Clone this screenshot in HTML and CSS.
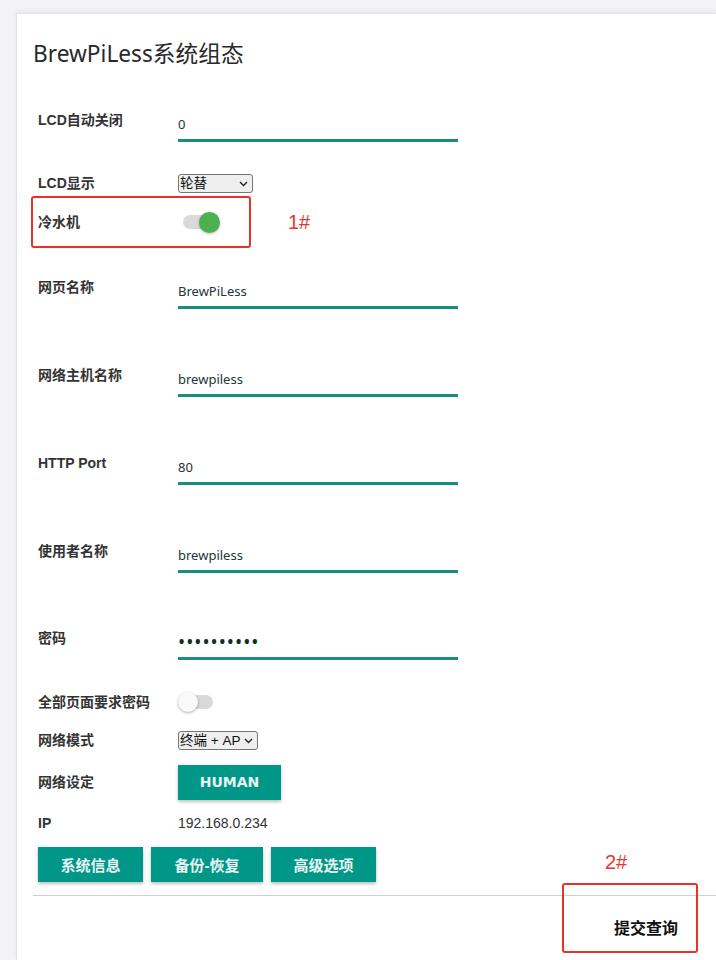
FILE: index.html
```html
<!DOCTYPE html>
<html lang="zh-CN">
<head>
<meta charset="utf-8">
<title>BrewPiLess系统组态</title>
<link rel="stylesheet" href="styles.css">
</head>
<body>
<div class="card">
  <h1 class="title">BrewPiLess系统组态</h1>
  <form class="form">
    <div class="row row-63">
      <label class="lbl">LCD自动关闭</label>
      <div class="ctl ctl-input"><input class="txt" type="text" value="0"></div>
    </div>
    <div class="row row-39">
      <label class="lbl">LCD显示</label>
      <div class="ctl">
        <span class="sel sel-75">
          <select><option>轮替</option></select>
          <svg class="chev" width="9" height="6" viewBox="0 0 9 6"><path d="M1 1 L4.5 4.5 L8 1" fill="none" stroke="#222" stroke-width="1.4"/></svg>
        </span>
      </div>
    </div>
    <div class="row row-65">
      <label class="lbl">冷水机</label>
      <div class="ctl"><span class="toggle toggle-on"><span class="knob"></span></span></div>
    </div>
    <div class="row row-88">
      <label class="lbl">网页名称</label>
      <div class="ctl ctl-input"><input class="txt" type="text" value="BrewPiLess"></div>
    </div>
    <div class="row row-88">
      <label class="lbl">网络主机名称</label>
      <div class="ctl ctl-input"><input class="txt" type="text" value="brewpiless"></div>
    </div>
    <div class="row row-88">
      <label class="lbl">HTTP Port</label>
      <div class="ctl ctl-input"><input class="txt" type="text" value="80"></div>
    </div>
    <div class="row row-87">
      <label class="lbl">使用者名称</label>
      <div class="ctl ctl-input"><input class="txt" type="text" value="brewpiless"></div>
    </div>
    <div class="row row-64">
      <label class="lbl">密码</label>
      <div class="ctl ctl-input"><input class="txt pwd" type="password" value="brewpiless"></div>
    </div>
    <div class="row row-38">
      <label class="lbl">全部页面要求密码</label>
      <div class="ctl"><span class="toggle"><span class="knob"></span></span></div>
    </div>
    <div class="row row-42">
      <label class="lbl">网络模式</label>
      <div class="ctl">
        <span class="sel sel-80">
          <select><option>终端 + AP</option></select>
          <svg class="chev" width="9" height="6" viewBox="0 0 9 6"><path d="M1 1 L4.5 4.5 L8 1" fill="none" stroke="#222" stroke-width="1.4"/></svg>
        </span>
      </div>
    </div>
    <div class="row row-41">
      <label class="lbl">网络设定</label>
      <div class="ctl"><button type="button" class="btn btn-human">HUMAN</button></div>
    </div>
    <div class="row row-41">
      <label class="lbl">IP</label>
      <div class="ctl"><span class="ip">192.168.0.234</span></div>
    </div>
    <div class="btn-row">
      <button type="button" class="btn btn-cn">系统信息</button>
      <button type="button" class="btn btn-cn">备份-恢复</button>
      <button type="button" class="btn btn-cn">高级选项</button>
    </div>
  </form>
  <hr class="sep">
  <div class="submit-row">
    <button type="submit" class="submit">提交查询</button>
  </div>
</div>

<div class="note-box note-box-1"></div>
<div class="note-text note-text-1">1#</div>
<div class="note-text note-text-2">2#</div>
<div class="note-box note-box-2"></div>
</body>
</html>
```

FILE: styles.css
```css
html, body {
  margin: 0;
  padding: 0;
  overflow: hidden;
  height: 960px;
}
body {
  position: relative;
  background: #f3f3f5;
  font-family: "Liberation Sans", "Noto Sans CJK SC", sans-serif;
  color: #333;
}
.card {
  margin: 13px 0 0 16px;
  width: 700px;
  height: 947px;
  box-sizing: border-box;
  background: #fff;
  border-top: 1px solid #e6e6e8;
  border-left: 1px solid #e2e2e4;
  box-shadow: 0 -2px 5px rgba(0, 0, 0, 0.05);
  padding: 25px 0 0 16px;
}
.title {
  margin: 0 0 39px 0;
  font-family: "Noto Sans", "Noto Sans CJK SC", sans-serif;
  font-weight: 400;
  font-size: 22.7px;
  line-height: 30px;
  color: #2a2a2a;
}
.form {
  padding-left: 5px;
  margin: 0;
}
.row {
  display: flex;
  align-items: flex-start;
}
.row-63 { height: 63px; }
.row-39 { height: 39px; }
.row-65 { height: 65px; }
.row-88 { height: 88px; }
.row-87 { height: 87px; }
.row-64 { height: 64px; }
.row-38 { height: 38px; }
.row-42 { height: 42px; }
.row-41 { height: 41px; }
.lbl {
  width: 140px;
  flex: none;
  line-height: 24px;
  font-size: 14px;
  font-weight: 700;
  color: #333;
}
.ctl {
  height: 24px;
  display: flex;
  align-items: center;
}
.ctl-input {
  align-items: flex-start;
}
.txt {
  margin: 1px 0 0 0;
  width: 280px;
  height: 33px;
  box-sizing: border-box;
  border: none;
  border-bottom: 3px solid #1a8c86;
  background: transparent;
  padding: 0;
  outline: none;
  font-family: "Noto Sans", "Noto Sans CJK SC", sans-serif;
  font-size: 13px;
  color: #263238;
}
.pwd {
  font-size: 19px;
  color: #0f2f2c;
  letter-spacing: 1px;
}
.sel {
  position: relative;
  display: inline-block;
  height: 19px;
}
.sel select {
  appearance: none;
  -webkit-appearance: none;
  height: 19px;
  box-sizing: border-box;
  border: 1px solid #767676;
  border-radius: 3px;
  background: #efefef;
  padding: 0 0 0 1px;
  margin: 0;
  font-family: "Liberation Sans", "Noto Sans CJK SC", sans-serif;
  font-size: 13.5px;
  line-height: 17px;
  color: #111;
}
.sel-75 select { width: 75px; }
.sel-80 select { width: 80px; }
.chev {
  position: absolute;
  right: 5px;
  top: 7px;
  pointer-events: none;
}
.toggle {
  position: relative;
  display: inline-block;
  width: 35px;
  height: 14px;
  border-radius: 7px;
  background: #d9d9d9;
}
.toggle-on {
  margin-left: 5px;
}
.knob {
  position: absolute;
  top: -3px;
  left: 0;
  width: 20px;
  height: 20px;
  border-radius: 50%;
  background: #fafafa;
  box-shadow: 0 1px 3px rgba(0, 0, 0, 0.3);
}
.toggle-on .knob {
  left: 16px;
  width: 21px;
  height: 21px;
  top: -3.5px;
  background: #4caf50;
  box-shadow: 0 1px 3px rgba(0, 0, 0, 0.25);
}
.btn {
  border: none;
  margin: 0;
  background: #009688;
  color: #e8f5f3;
  height: 35px;
  box-shadow: 0 2px 3px rgba(0, 0, 0, 0.2), 0 1px 5px rgba(0, 0, 0, 0.08);
  cursor: pointer;
}
.btn-human {
  width: 103px;
  padding: 0;
  font-family: "DejaVu Sans", sans-serif;
  font-weight: 700;
  font-size: 14px;
}
.ip {
  font-size: 14px;
  color: #333;
}
.btn-row {
  display: flex;
  gap: 8px;
  margin-top: -5px;
  height: 48px;
}
.btn-cn {
  padding: 0 22.5px;
  font-family: "Liberation Sans", "Noto Sans CJK SC", sans-serif;
  font-weight: 700;
  font-size: 15px;
}
.btn-cn:nth-child(2) {
  padding: 0 23.5px;
}
.sep {
  margin: 0;
  border: none;
  border-top: 1px solid #cfcfcf;
}
.submit-row {
  display: flex;
  padding: 21px 0 0 581px;
}
.submit {
  border: none;
  background: transparent;
  padding: 0;
  font-family: "Liberation Sans", "Noto Sans CJK SC", sans-serif;
  font-weight: 700;
  font-size: 16px;
  line-height: 24px;
  color: #111;
}
.note-box {
  position: absolute;
  box-sizing: border-box;
  border: 2px solid #e5332a;
  border-radius: 3px;
}
.note-box-1 {
  left: 31px;
  top: 196px;
  width: 220px;
  height: 52px;
}
.note-box-2 {
  left: 562px;
  top: 883px;
  width: 136px;
  height: 70px;
}
.note-text {
  position: absolute;
  font-family: "Liberation Sans", sans-serif;
  font-size: 20px;
  line-height: 24px;
  color: #e0392e;
}
.note-text-1 {
  left: 288px;
  top: 210px;
}
.note-text-2 {
  left: 605px;
  top: 850px;
}
```
